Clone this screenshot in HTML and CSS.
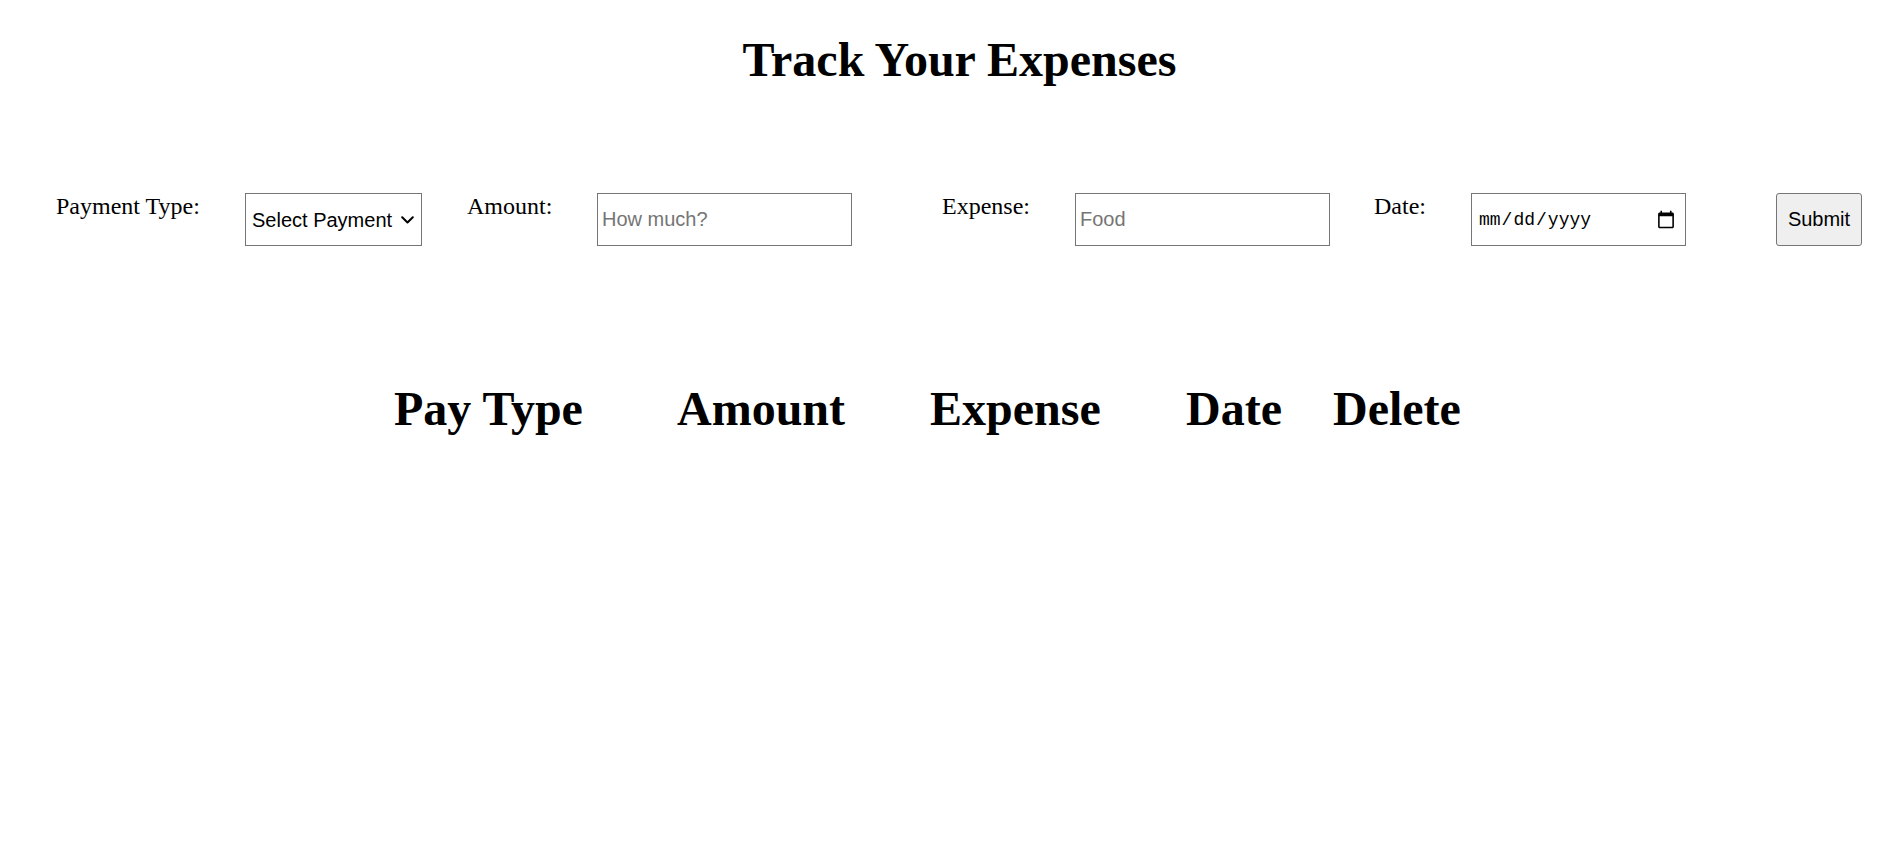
FILE: index.html
```html
<!DOCTYPE html>
<html lang="en">
<head>
<meta charset="utf-8">
<title>Track Your Expenses</title>
<link rel="stylesheet" href="styles.css">
</head>
<body>
<h1 class="title">Track Your Expenses</h1>
<form class="entry">
  <div class="field field-pay">
    <label class="label label-pay" for="pay">Payment Type:</label>
    <span class="select-wrap">
      <select id="pay" class="control select">
        <option>Select Payment</option>
        <option>Cash</option>
        <option>Card</option>
      </select>
      <svg class="chevron" width="13" height="8" viewBox="0 0 13 8" aria-hidden="true">
        <path d="M1.2 1.2 L6.5 6.5 L11.8 1.2" fill="none" stroke="#000" stroke-width="2" stroke-linecap="round" stroke-linejoin="round"/>
      </svg>
    </span>
  </div>
  <div class="field field-amount">
    <label class="label label-amount" for="amount">Amount:</label>
    <input id="amount" class="control text" type="text" placeholder="How much?">
  </div>
  <div class="field field-expense">
    <label class="label label-expense" for="expense">Expense:</label>
    <input id="expense" class="control text" type="text" placeholder="Food">
  </div>
  <div class="field field-date">
    <label class="label label-date" for="date">Date:</label>
    <input id="date" class="control date" type="date">
  </div>
  <button class="control submit" type="button">Submit</button>
</form>
<table class="expenses">
  <thead>
    <tr>
      <th class="col-type">Pay Type</th>
      <th class="col-amount">Amount</th>
      <th class="col-expense">Expense</th>
      <th class="col-date">Date</th>
      <th class="col-delete">Delete</th>
    </tr>
  </thead>
  <tbody></tbody>
</table>
</body>
</html>
```

FILE: styles.css
```css
html, body {
  margin: 0;
  padding: 0;
  background: #ffffff;
  color: #000000;
  font-family: "Liberation Serif", "Times New Roman", serif;
}

.title {
  margin: 32px 0 0;
  padding-left: 32px;
  text-align: center;
  font-size: 48px;
  font-weight: bold;
  line-height: normal;
}

.entry {
  display: flex;
  align-items: flex-start;
  margin-top: 106px;
  padding-left: 56px;
}

.field {
  display: flex;
  align-items: flex-start;
}

.label {
  font-size: 24px;
  line-height: normal;
  white-space: nowrap;
}

.label-pay { width: 189px; }
.label-amount { width: 130px; }
.label-expense { width: 133px; }
.label-date { width: 97px; }

.control {
  box-sizing: border-box;
  height: 53px;
  margin: 0;
  border: 1px solid #767676;
  font-family: "Liberation Sans", Arial, sans-serif;
  font-size: 20px;
  color: #000000;
  background-color: #ffffff;
}

.field-amount { margin-left: 45px; }
.field-expense { margin-left: 90px; }
.field-date { margin-left: 44px; }

.select-wrap {
  position: relative;
  display: block;
}

.select {
  display: block;
  width: 177px;
  padding: 0 0 0 6px;
  border-radius: 0;
  appearance: none;
  -webkit-appearance: none;
}

.chevron {
  position: absolute;
  left: 156px;
  top: 23px;
  pointer-events: none;
}

.text {
  width: 255px;
  padding: 0 4px;
  border-radius: 0;
}

.text::placeholder {
  color: #757575;
}

.date {
  width: 215px;
  padding: 0 9px 0 6px;
  border-radius: 0;
  font-family: "Liberation Mono", "DejaVu Sans Mono", monospace;
  font-size: 18px;
}

.date::-webkit-calendar-picker-indicator {
  width: 20px;
  height: 20px;
  padding: 0;
  margin: 0;
}

.submit {
  width: 86px;
  margin-left: 90px;
  padding: 0;
  border-radius: 3px;
  background-color: #efefef;
  text-align: center;
}

.expenses {
  margin-top: 135px;
  margin-left: 394px;
  border-collapse: collapse;
  border-spacing: 0;
}

.expenses th {
  padding: 0;
  text-align: left;
  font-size: 48px;
  font-weight: bold;
  line-height: normal;
  white-space: nowrap;
}

.col-type { width: 283px; }
.col-amount { width: 253px; }
.col-expense { width: 256px; }
.col-date { width: 147px; }
.col-delete { width: 130px; }
```
